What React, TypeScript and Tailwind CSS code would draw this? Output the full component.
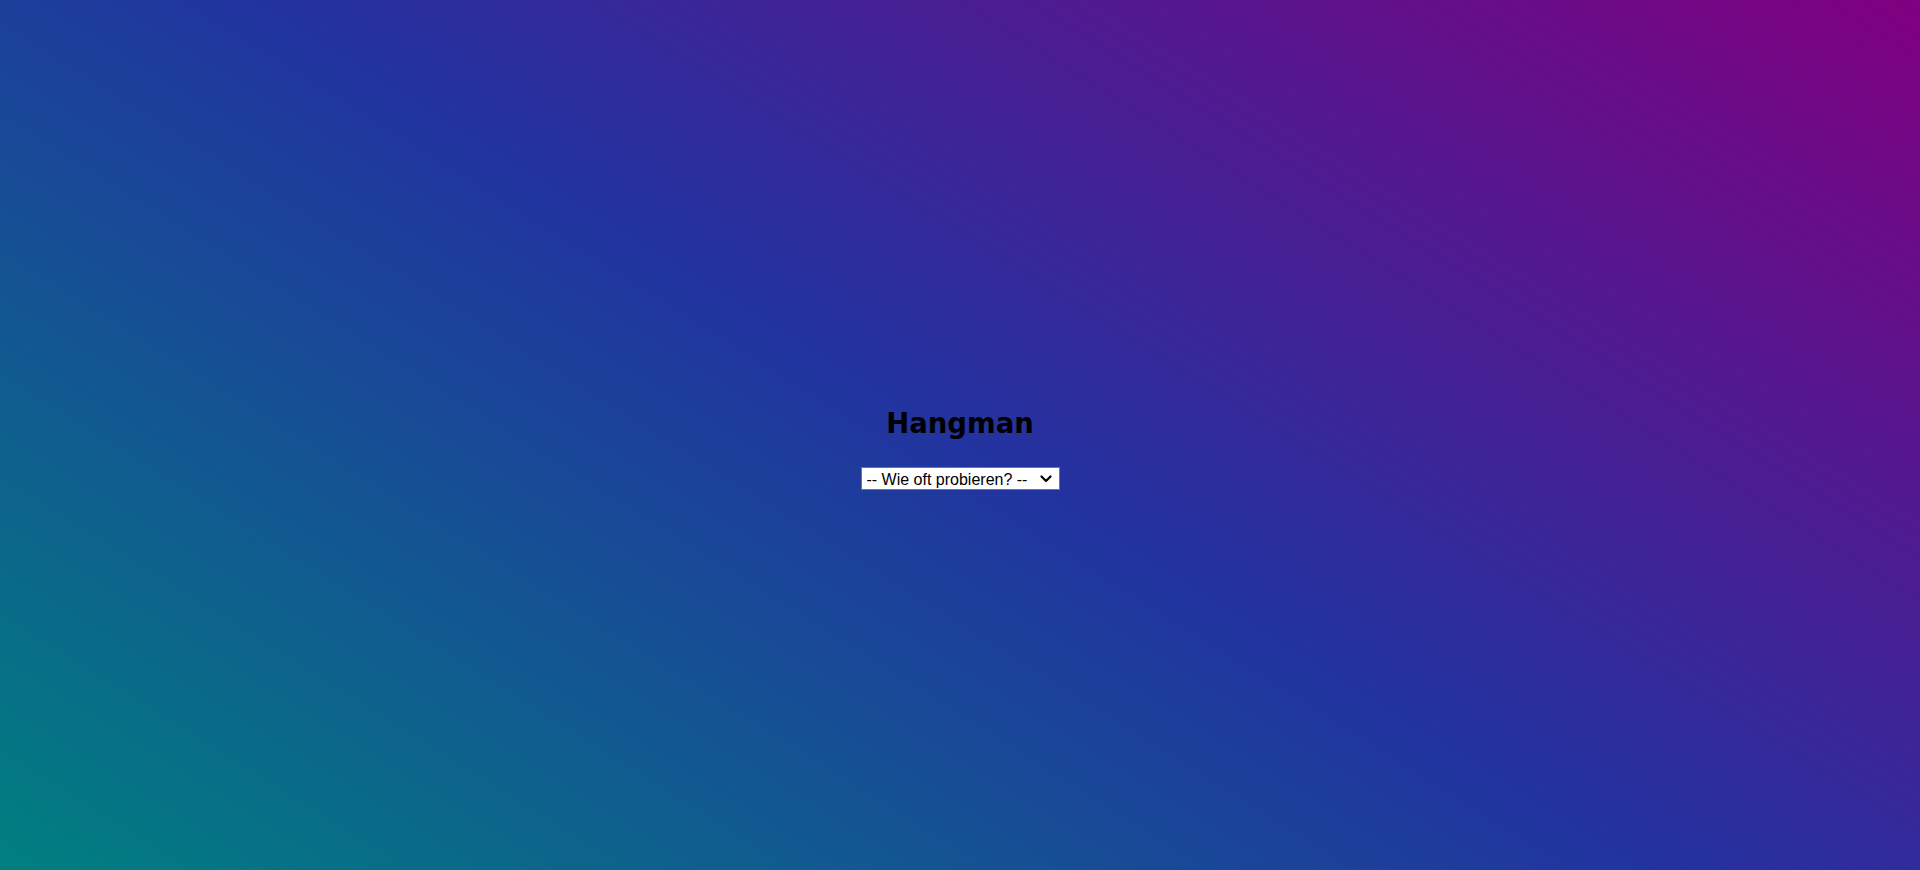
import React from "react";

export default function App() {
  return (
    <div className="flex min-h-screen w-full flex-col items-center justify-center bg-[linear-gradient(32deg,#008080_0%,#2233a0_50%,#800080_100%)] pt-[23px]">
      <h1 className="mb-[23px] font-['DejaVu_Sans',sans-serif] text-[27.5px] font-bold text-black">
        Hangman
      </h1>
      <div className="relative">
        <select
          defaultValue=""
          className="block h-[23px] w-[199px] appearance-none border border-[#767676] bg-white py-0 pl-[5px] pr-[30px] font-['Liberation_Sans',Arial,sans-serif] text-[16px] text-black"
        >
          <option value="" disabled>
            -- Wie oft probieren? --
          </option>
          <option value="5">5</option>
          <option value="8">8</option>
          <option value="10">10</option>
        </select>
        <svg
          className="pointer-events-none absolute right-[8px] top-[8px]"
          width="12"
          height="8"
          viewBox="0 0 12 8"
          fill="none"
        >
          <polyline
            points="1.5,1.5 6,6 10.5,1.5"
            stroke="#000"
            strokeWidth="2.2"
            strokeLinecap="round"
            strokeLinejoin="round"
          />
        </svg>
      </div>
    </div>
  );
}
